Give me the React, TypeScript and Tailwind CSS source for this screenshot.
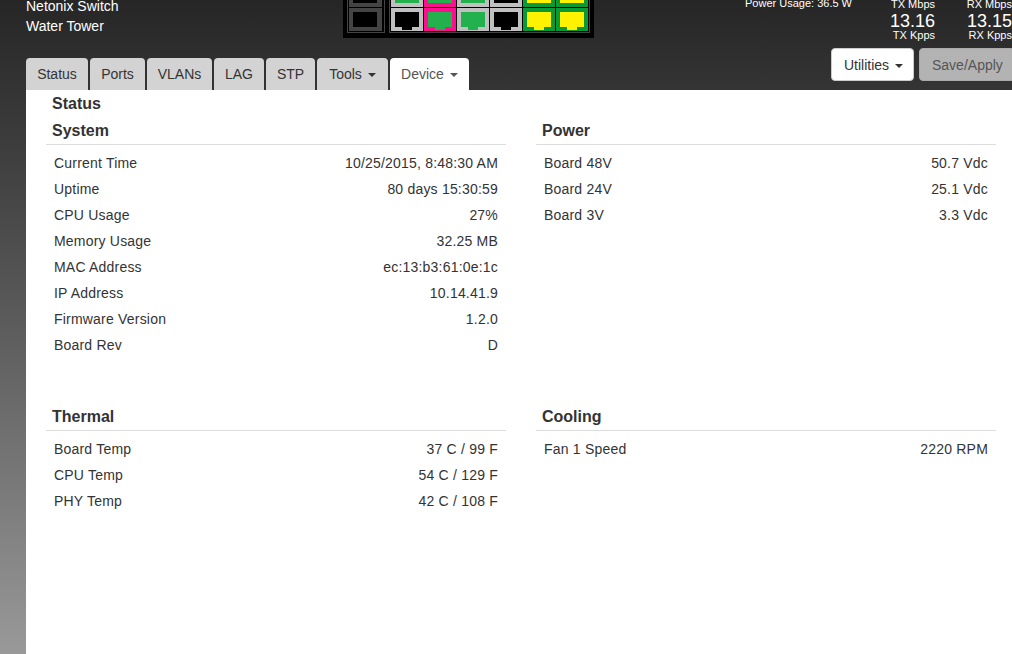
const FONT = "font-['Liberation_Sans',Arial,sans-serif]";

type PortKind = 'off' | 'black' | 'pinkGreen' | 'green' | 'yellow';

const PORT_COLORS: Record<PortKind, { bg: string; fg: string }> = {
  off: { bg: '#444444', fg: '#000000' },
  black: { bg: '#c0c0c0', fg: '#000000' },
  pinkGreen: { bg: '#ff0f8f', fg: '#22b14c' },
  green: { bg: '#c0c0c0', fg: '#22b14c' },
  yellow: { bg: '#0a9a35', fg: '#fff200' },
};

// top row ports are mounted upside down, so the clip notch points up
function Port({ kind, flip = false }: { kind: PortKind; flip?: boolean }) {
  const c = PORT_COLORS[kind];
  const w = kind === 'off' ? 33 : 32;
  const points = flip
    ? '4,19 28,19 28,4 21,4 21,1 11,1 11,4 4,4'
    : '4,4 28,4 28,19 21,19 21,22 11,22 11,19 4,19';
  return (
    <svg width={w} height="23" viewBox={`0 0 ${w} 23`} className="block">
      <rect width={w} height="23" fill={c.bg} />
      {kind === 'off' ? (
        <rect x="4" y="4" width="24" height="15" fill={c.fg} />
      ) : (
        <polygon points={points} fill={c.fg} />
      )}
    </svg>
  );
}

const row1: PortKind[] = ['green', 'pinkGreen', 'green', 'black', 'yellow', 'yellow'];
const row2: PortKind[] = ['black', 'pinkGreen', 'green', 'black', 'yellow', 'yellow'];

function PortPanel() {
  return (
    <div className="w-[251px] h-[38px] bg-black overflow-hidden flex items-end gap-[4px] pl-[4px] pb-[5px] shrink-0">
      <div className="border border-[#444] p-px flex flex-col gap-px w-[38px]">
        <Port kind="off" />
        <Port kind="off" />
      </div>
      <div className="border border-[#444] p-px flex flex-col gap-px">
        <div className="flex gap-px">
          {row1.map((k, i) => (
            <Port key={i} kind={k} flip />
          ))}
        </div>
        <div className="flex gap-px">
          {row2.map((k, i) => (
            <Port key={i} kind={k} />
          ))}
        </div>
      </div>
    </div>
  );
}

function Caret({ className = 'border-t-[#333]' }: { className?: string }) {
  return (
    <span className={`inline-block w-0 h-0 ml-[6px] align-middle border-x-4 border-x-transparent border-t-4 ${className}`} />
  );
}

const tabs = [
  { label: 'Status', w: 'w-[62px]' },
  { label: 'Ports', w: 'w-[55px]' },
  { label: 'VLANs', w: 'w-[65px]' },
  { label: 'LAG', w: 'w-[50px]' },
  { label: 'STP', w: 'w-[49px]' },
];

function Rate({ title, value, sub }: { title: string; value: string; sub: string }) {
  return (
    <div className="w-[45px] text-right text-white shrink-0 whitespace-nowrap flex flex-col items-end">
      <div className="text-[11px] leading-[12px] mt-px">{title}</div>
      <div className="text-[18px] leading-[20px] mt-px">{value}</div>
      <div className="text-[11px] leading-[12px] -mt-[2px]">{sub}</div>
    </div>
  );
}

function Section({ title, rows }: { title: string; rows: [string, string][] }) {
  return (
    <div>
      <h3 className="text-[16px] leading-[22px] font-bold text-[#333] pl-[6px] pt-px pb-[2px] border-b border-[#ddd]">
        {title}
      </h3>
      <div className="pt-[6px] px-[8px]">
        {rows.map(([k, v]) => (
          <div key={k} className="flex justify-between h-[26px] leading-[24px] text-[14px] tracking-[0.2px] text-[#333]">
            <span>{k}</span>
            <span>{v}</span>
          </div>
        ))}
      </div>
    </div>
  );
}

export default function App() {
  return (
    <div className={`${FONT} h-[654px] w-[1012px] overflow-hidden flex flex-col pl-[26px] bg-gradient-to-b from-[#262626] to-[#999999]`}>
      {/* Header */}
      <div className="h-[90px] shrink-0 flex">
        <div className="w-[568px] shrink-0 flex flex-col justify-between">
          <div className="flex h-[38px]">
            <div className="w-[317px] shrink-0 -mt-[4px]">
              <div className="text-[14px] leading-[20px] text-white">Netonix Switch</div>
              <div className="text-[14px] leading-[20px] text-white">Water Tower</div>
            </div>
            <PortPanel />
          </div>
          <div className="flex gap-[2px] text-[14px] h-[32px]">
            {tabs.map((t) => (
              <div key={t.label} className={`${t.w} bg-[#d3d3d3] rounded-t-[4px] text-center leading-[32px] text-[#333]`}>
                {t.label}
              </div>
            ))}
            <div className="w-[71px] bg-[#d3d3d3] rounded-t-[4px] text-center leading-[32px] text-[#333]">
              Tools
              <Caret />
            </div>
            <div className="w-[79px] bg-white rounded-t-[4px] text-center leading-[32px] text-[#555]">
              Device
              <Caret className="border-t-[#555]" />
            </div>
          </div>
        </div>
        <div className="flex-1 flex flex-col items-end">
          <div className="flex items-start h-[51px] -mt-[3px] w-full">
            <div className="ml-[151px] w-[107px] shrink-0 text-[11px] leading-[12px] text-white whitespace-nowrap">
              Power Usage: 36.5 W
            </div>
            <div className="ml-auto flex gap-[32px] justify-end">
              <Rate title="TX Mbps" value="13.16" sub="TX Kpps" />
              <Rate title="RX Mbps" value="13.15" sub="RX Kpps" />
            </div>
          </div>
          <div className="flex gap-[5px] text-[14px] -mr-[3px]">
            <div className="w-[83px] h-[33px] bg-white border border-[#ccc] rounded-[4px] pl-[12px] leading-[33px] text-[#333] whitespace-nowrap">
              Utilities
              <Caret />
            </div>
            <div className="w-[96px] h-[33px] bg-[#b3b3b3] border border-[#aaa] rounded-[4px] pl-[12px] leading-[33px] text-[#555] whitespace-nowrap">
              Save/Apply
            </div>
          </div>
        </div>
      </div>
      {/* Content */}
      <div className="flex-1 bg-white pl-[20px] pr-[16px]">
        <div className="text-[16px] leading-[20px] mt-[4px] font-bold text-[#333] pl-[6px]">Status</div>
        <div className="grid grid-cols-2 gap-x-[30px] grid-rows-[286px_auto] mt-[5px]">
          <Section
            title="System"
            rows={[
              ['Current Time', '10/25/2015, 8:48:30 AM'],
              ['Uptime', '80 days 15:30:59'],
              ['CPU Usage', '27%'],
              ['Memory Usage', '32.25 MB'],
              ['MAC Address', 'ec:13:b3:61:0e:1c'],
              ['IP Address', '10.14.41.9'],
              ['Firmware Version', '1.2.0'],
              ['Board Rev', 'D'],
            ]}
          />
          <Section
            title="Power"
            rows={[
              ['Board 48V', '50.7 Vdc'],
              ['Board 24V', '25.1 Vdc'],
              ['Board 3V', '3.3 Vdc'],
            ]}
          />
          <Section
            title="Thermal"
            rows={[
              ['Board Temp', '37 C / 99 F'],
              ['CPU Temp', '54 C / 129 F'],
              ['PHY Temp', '42 C / 108 F'],
            ]}
          />
          <Section title="Cooling" rows={[['Fan 1 Speed', '2220 RPM']]} />
        </div>
      </div>
    </div>
  );
}
